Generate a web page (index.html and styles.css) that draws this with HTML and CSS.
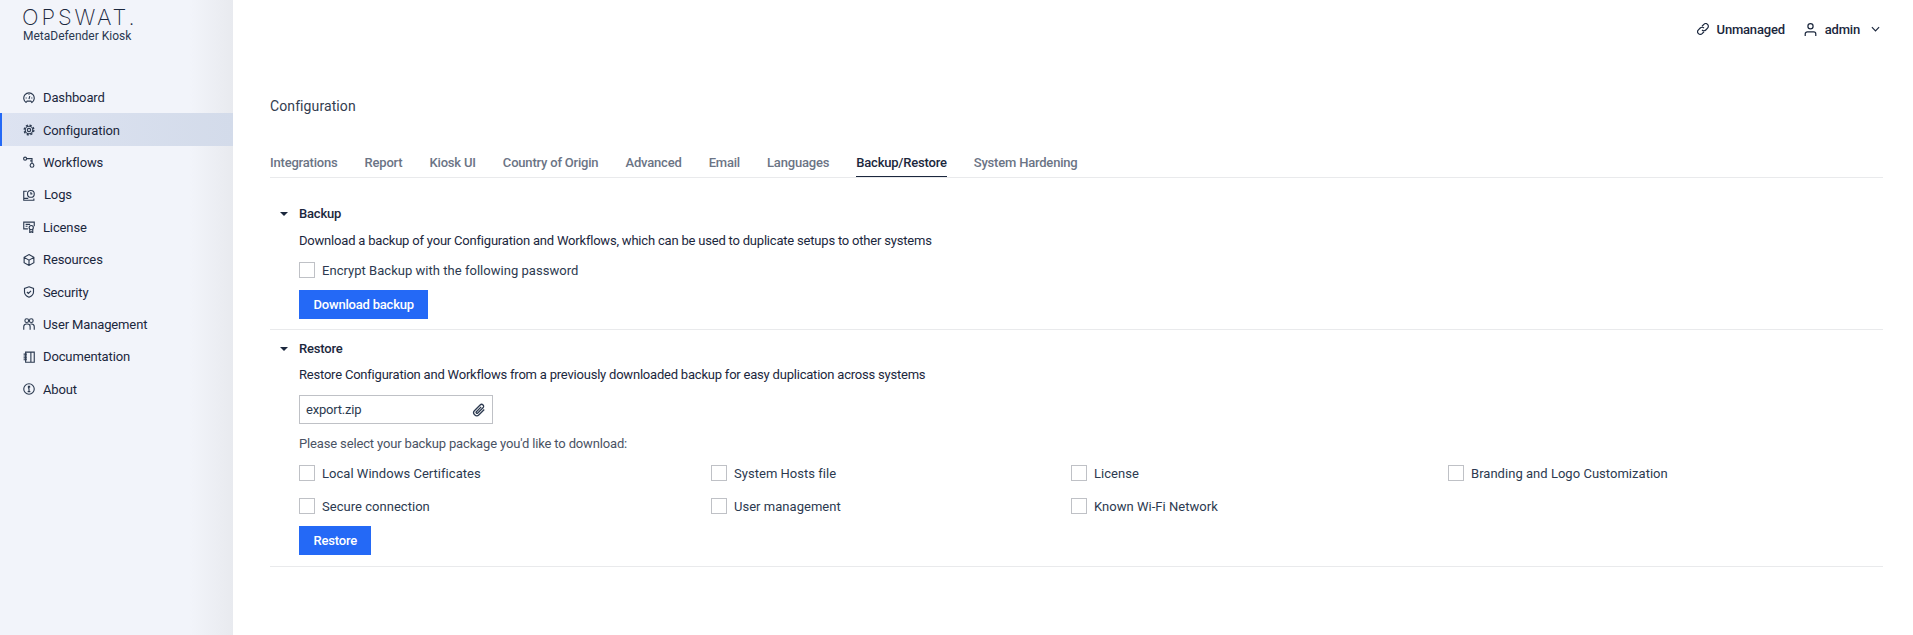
FILE: index.html
```html
<!DOCTYPE html>
<html lang="en">
<head>
<meta charset="utf-8">
<title>MetaDefender Kiosk</title>
<link rel="stylesheet" href="styles.css">
</head>
<body>
<div class="app">
  <aside class="sidebar">
    <div class="brand">
      <div class="logo">OPSWAT.</div>
      <div class="product">MetaDefender Kiosk</div>
    </div>
    <nav class="nav">
      <a class="nav-item"><svg class="nav-icon" viewBox="0 0 16 16"><path d="M4.200 14A7 7 0 1 1 11.800 14L10.500 12.200H5.500L4.200 14M8 9.500l1-4M3.500 8H5M11 8h1.500M8 3v1"/></svg><span>Dashboard</span></a>
      <a class="nav-item active"><svg class="nav-icon" viewBox="0 0 16 16"><circle cx="8" cy="8" r="2.200"/><circle cx="8" cy="8" r="5"/><circle class="teeth" cx="8" cy="8" r="6.500" stroke-dasharray="2.900 2.200"/></svg><span>Configuration</span></a>
      <a class="nav-item"><svg class="nav-icon" viewBox="0 0 16 16"><circle cx="2.800" cy="3.500" r="2"/><circle cx="12" cy="12.500" r="2.500"/><path d="M4.800 3.500H12V10M12 6.500H9.500"/></svg><span>Workflows</span></a>
      <a class="nav-item"><svg class="nav-icon wide" viewBox="0 0 16 16"><path d="M5 3H1v12h13.500v-2.500M1 12.500h6"/><circle cx="10.500" cy="6.500" r="4.500"/><path d="M10.500 4v2.500h2"/></svg><span>Logs</span></a>
      <a class="nav-item"><svg class="nav-icon" viewBox="0 0 16 16"><path d="M6.500 10.500H1V1.500h14V7M3.500 4.500h6M3.500 7H6"/><circle cx="11" cy="8.800" r="2.800"/><path d="M9 11v4.500l2-1.200 2 1.200V11"/></svg><span>License</span></a>
      <a class="nav-item"><svg class="nav-icon" viewBox="0 0 16 16"><path d="M8 .8l6.500 3.700v7L8 15.200l-6.500-3.700v-7zM1.500 4.500L8 8.200l6.500-3.700M8 8.200v7"/></svg><span>Resources</span></a>
      <a class="nav-item"><svg class="nav-icon" viewBox="0 0 16 16"><path d="M8 1l6 2.200v4.800c0 3.300-2.500 5.600-6 7-3.500-1.400-6-3.700-6-7V3.200zM5.200 8l2 2 3.500-3.600"/></svg><span>Security</span></a>
      <a class="nav-item"><svg class="nav-icon" viewBox="0 0 16 16"><circle cx="5" cy="3.500" r="2.500"/><circle cx="11" cy="3.500" r="2.500"/><path d="M1 15.500v-4a3.500 3.500 0 0 1 3.500-3.500h1.500a3.500 3.500 0 0 1 3.500 3.500v4M9.800 8h1.700a3.500 3.500 0 0 1 3.500 3.500v4"/></svg><span>User Management</span></a>
      <a class="nav-item"><svg class="nav-icon" viewBox="0 0 16 16"><path d="M3.500 1.500h11.500v13.500H3.500zM10.500 1.500v13.500M.8 4.200h4.500M.8 6.700h4.500M.8 9.200h4.500M.8 11.700h4.500"/></svg><span>Documentation</span></a>
      <a class="nav-item"><svg class="nav-icon" viewBox="0 0 16 16"><circle cx="8" cy="8" r="7"/><path d="M8 7v4.500M6.200 11.500h3.600M6.800 7H8M7.200 4.400h1.600v1.200H7.200z"/></svg><span>About</span></a>
    </nav>
  </aside>
  <div class="main">
    <header class="topbar">
      <span class="top-item"><svg class="top-icon" viewBox="0 0 16 16"><path d="M6.700 4.300l2.400-2.400a3.500 3.500 0 0 1 5 5l-2.400 2.400a3.500 3.500 0 0 1-5 0"/><path d="M9.300 11.700l-2.400 2.400a3.500 3.500 0 0 1-5-5l2.400-2.400a3.500 3.500 0 0 1 5 0"/></svg>Unmanaged</span>
      <span class="top-item user"><svg class="user-icon" viewBox="0 0 16 16"><circle cx="8" cy="4" r="3.200"/><path d="M1.500 16v-2.500a2.500 2.500 0 0 1 2.500-2.500h8a2.500 2.500 0 0 1 2.500 2.500V16"/></svg>admin<svg class="chev" viewBox="0 0 10 6"><path d="M1 1l4 4 4-4"/></svg></span>
    </header>
    <main class="content">
      <h1 class="title">Configuration</h1>
      <div class="tabs">
        <a class="tab">Integrations</a>
        <a class="tab">Report</a>
        <a class="tab">Kiosk UI</a>
        <a class="tab">Country of Origin</a>
        <a class="tab">Advanced</a>
        <a class="tab">Email</a>
        <a class="tab">Languages</a>
        <a class="tab current">Backup/Restore</a>
        <a class="tab">System Hardening</a>
      </div>
      <section class="panel backup">
        <div class="panel-head"><span class="caret"></span>Backup</div>
        <p class="desc">Download a backup of your Configuration and Workflows, which can be used to duplicate setups to other systems</p>
        <label class="check"><span class="box"></span>Encrypt Backup with the following password</label>
        <button class="btn">Download backup</button>
      </section>
      <section class="panel restore">
        <div class="panel-head"><span class="caret"></span>Restore</div>
        <p class="desc">Restore Configuration and Workflows from a previously downloaded backup for easy duplication across systems</p>
        <div class="file">export.zip<svg class="clip" viewBox="0 0 16 16"><path d="M14 7.500l-6 6a3.500 3.500 0 0 1-5-5l6.300-6.300a2.300 2.300 0 0 1 3.300 3.300l-6 6a1.100 1.100 0 0 1-1.600-1.600l5.500-5.500"/></svg></div>
        <p class="desc select">Please select your backup package you'd like to download:</p>
        <div class="grid">
          <label class="check"><span class="box"></span>Local Windows Certificates</label>
          <label class="check"><span class="box"></span>System Hosts file</label>
          <label class="check"><span class="box"></span>License</label>
          <label class="check"><span class="box"></span>Branding and Logo Customization</label>
          <label class="check"><span class="box"></span>Secure connection</label>
          <label class="check"><span class="box"></span>User management</label>
          <label class="check"><span class="box"></span>Known Wi-Fi Network</label>
        </div>
        <button class="btn">Restore</button>
      </section>
    </main>
  </div>
</div>
</body>
</html>
```
FILE: styles.css
```css
* { box-sizing: border-box; }
html, body { margin: 0; height: 100%; }
body { font-family: Roboto, "Liberation Sans", sans-serif; font-size: 13px; color: #1b273d; background: #fff; overflow: hidden; }
.app { display: flex; height: 635px; }
.sidebar { width: 233px; flex: none; background: linear-gradient(90deg, #f2f4fa 0, #f2f4fa 190px, #e8eaef 233px); }
.brand { height: 81px; padding: 4px 0 0 22px; }
.logo { font-family: Inter, "Liberation Sans", sans-serif; font-size: 22px; line-height: 26px; letter-spacing: 2.9px; color: #1b273d; font-weight: 200; }
.product { font-size: 12px; line-height: 14px; letter-spacing: 0; color: #2a3850; margin: -1px 0 0 1px; }
.nav { display: flex; flex-direction: column; }
.nav-item { height: 32.4px; display: flex; align-items: center; padding: 1px 0 0 23px; gap: 8px; color: #1b273d; letter-spacing: -.13px; }
.nav-item.active { background: linear-gradient(90deg, #dde3f1, #d3dbea); box-shadow: inset 2px 0 0 #2469f6; }
.nav-icon { width: 12px; height: 12px; flex: none; fill: none; stroke: #2c3a50; stroke-width: 1.5; }
.nav-icon .teeth { stroke-width: 1.7; }
.nav-icon.wide { margin-right: 1px; }
.main { flex: 1; min-width: 0; }
.topbar { height: 58px; display: flex; justify-content: flex-end; align-items: center; padding-right: 33px; font-weight: 500; font-size: 13px; letter-spacing: -.2px; }
.top-item { display: flex; align-items: center; }
.top-icon { width: 12px; height: 12px; margin-right: 8px; fill: none; stroke: #1b273d; stroke-width: 1.6; }
.user { margin-left: 19px; }
.user-icon { width: 13px; height: 13px; margin-right: 8px; fill: none; stroke: #1b273d; stroke-width: 1.5; }
.chev { width: 9px; height: 6px; margin-left: 11px; fill: none; stroke: #1b273d; stroke-width: 1.3; }
.content { padding: 0 30px 0 37px; }
.title { margin: 39px 0 0; font-size: 14px; line-height: 18px; font-weight: 400; letter-spacing: .1px; color: #333d4f; }
.tabs { display: flex; gap: 27.1px; margin-top: 39px; height: 24px; border-bottom: 1px solid #e9eaec; }
.tab { height: 23px; font-weight: 500; font-size: 13px; line-height: 18px; letter-spacing: -.2px; color: #6b7485; white-space: nowrap; }
.tab.current { color: #1b273d; border-bottom: 1px solid #1b273d; }
.panel { padding: 0 0 0 29px; border-bottom: 1px solid #e9eaec; }
.backup { height: 152px; padding-top: 27px; }
.restore { height: 237px; padding-top: 10px; }
.panel-head { height: 18px; line-height: 18px; font-weight: 500; letter-spacing: -.2px; color: #1b273d; position: relative; }
.caret { position: absolute; left: -19px; top: 7px; border-left: 4px solid transparent; border-right: 4px solid transparent; border-top: 4px solid #1b273d; }
.desc { margin: 9px 0 0; line-height: 18px; letter-spacing: -.2px; color: #1b273d; }
.restore .desc { margin-top: 8px; letter-spacing: -.21px; }
.check { display: flex; align-items: center; height: 18px; margin-top: 11px; letter-spacing: .03px; color: #2c3a50; white-space: nowrap; }
.box { width: 16px; height: 16px; border: 1px solid #bfc1c6; background: #fff; margin-right: 7px; flex: none; }
.btn { display: block; height: 29px; padding: 0 14.5px; margin-top: 11px; border: 0; background: #2469f6; color: #fff; font: 500 13px Roboto, sans-serif; letter-spacing: -.2px; }
.file { display: flex; align-items: center; justify-content: space-between; width: 194px; height: 29px; border: 1px solid #bfc1c6; margin-top: 11px; padding: 0 6px; letter-spacing: -.2px; color: #2c3a50; }
.clip { width: 14px; height: 14px; fill: none; stroke: #2c3a50; stroke-width: 1.5; }
.restore .select { margin-top: 11px; letter-spacing: -.15px; color: #4a5364; }
.grid { display: grid; grid-template-columns: 412px 360px 377px 1fr; row-gap: 15px; margin-top: 11px; }
.grid .check { margin-top: 0; }
```
